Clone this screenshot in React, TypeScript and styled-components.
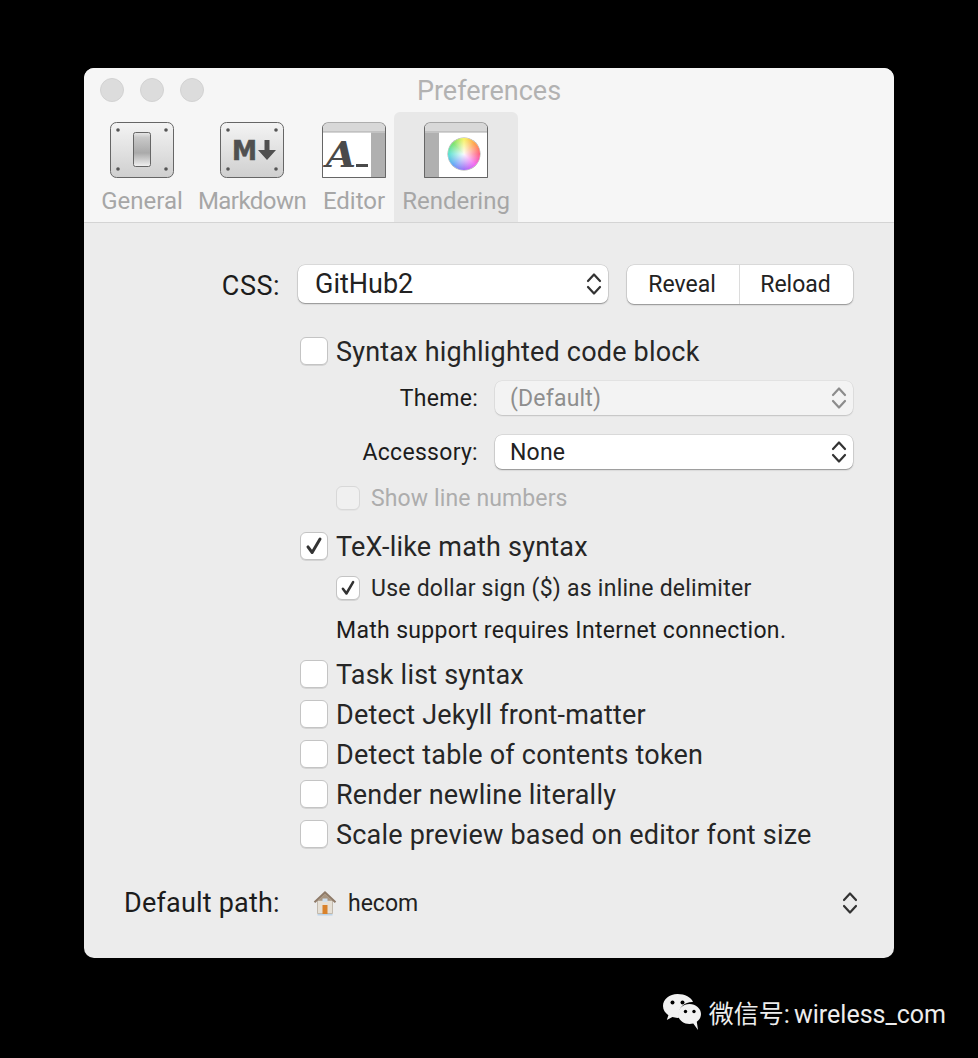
import React from 'react';
import styled, { createGlobalStyle } from 'styled-components';

const GlobalStyle = createGlobalStyle`
  html, body {
    margin: 0;
    background: #000;
  }
  body {
    font-family: Roboto, "Liberation Sans", sans-serif;
    color: #222;
  }
`;

const Page = styled.div`
  width: 978px;
  height: 1058px;
  padding: 68px 0 0 84px;
  box-sizing: border-box;
  overflow: hidden;
`;

const Window = styled.div`
  width: 810px;
  height: 890px;
  background: #ececec;
  border-radius: 10px;
  overflow: hidden;
`;

const Header = styled.div`
  height: 155px;
  box-sizing: border-box;
  background: #f6f6f6;
  border-bottom: 1px solid #d4d4d4;
`;

const TitleBar = styled.div`
  display: grid;
  grid-template-columns: 1fr auto 1fr;
  align-items: center;
  height: 44px;
  padding: 0 16px;
`;

const Lights = styled.div`
  display: flex;
  gap: 16px;
`;

const Light = styled.span`
  width: 24px;
  height: 24px;
  box-sizing: border-box;
  border-radius: 50%;
  background: #dcdcdc;
  border: 1px solid #d2d2d2;
`;

const Title = styled.div`
  font-size: 27px;
  color: #b2b2b2;
  margin-top: 1px;
`;

const Toolbar = styled.div`
  display: flex;
  padding-left: 10px;
`;

const Tab = styled.div<{ $width: number; $active?: boolean }>`
  width: ${p => p.$width}px;
  height: 110px;
  box-sizing: border-box;
  padding-top: 10px;
  display: flex;
  flex-direction: column;
  align-items: center;
  background: ${p => (p.$active ? '#e8e8e8' : 'transparent')};
  border-radius: 6px 6px 0 0;
`;

const IconBox = styled.div`
  position: relative;
  width: 64px;
  height: 56px;
`;

const ColorWheel = styled.span`
  position: absolute;
  left: 24px;
  top: 16px;
  width: 32px;
  height: 32px;
  border-radius: 50%;
  background:
    radial-gradient(circle, rgba(255, 255, 255, 0.95) 0%, rgba(255, 255, 255, 0) 72%),
    conic-gradient(#f7f25a, #ff9a3c, #ff5a7a, #f05cf0, #9a6cf5, #5aa0f5, #55e0d0, #70e060, #f7f25a);
  box-shadow: 0 0 0 0.5px rgba(0, 0, 0, 0.35);
`;

const TabLabel = styled.div<{ $tight?: boolean }>`
  margin-top: 8px;
  font-size: 24px;
  line-height: 30px;
  letter-spacing: ${p => (p.$tight ? '-0.55px' : '0')};
  color: #a6a6a6;
  white-space: nowrap;
`;

const Form = styled.div`
  padding: 42px 41px 0 0;
`;

const CssRow = styled.div`
  display: flex;
  align-items: flex-start;
  height: 39px;
`;

const RightLabel = styled.div<{ $width: number; $size: number; $spacing: number }>`
  width: ${p => p.$width}px;
  flex: none;
  text-align: right;
  font-size: ${p => p.$size}px;
  letter-spacing: ${p => p.$spacing}px;
  color: #1c1c1c;
  white-space: nowrap;
`;

const CssLabel = styled(RightLabel)`
  line-height: 43px;
`;

const Select = styled.div<{ $disabled?: boolean; $height: number }>`
  height: ${p => p.$height}px;
  box-sizing: border-box;
  display: flex;
  align-items: center;
  justify-content: space-between;
  background: ${p => (p.$disabled ? '#f3f3f3' : '#fff')};
  color: ${p => (p.$disabled ? '#8e8e8e' : '#222')};
  border-radius: 7px;
  box-shadow: 0 0 0 0.5px rgba(0, 0, 0, ${p => (p.$disabled ? 0.08 : 0.14)}),
    0 1px 1.5px rgba(0, 0, 0, ${p => (p.$disabled ? 0.14 : 0.35)});
`;

const CssSelect = styled(Select)`
  width: 310px;
  margin-left: 18px;
  padding: 0 3px 0 17px;
  font-size: 27px;
`;

const SmallSelect = styled(Select)`
  flex: 1;
  margin-left: 17px;
  padding: 0 3px 0 15px;
  font-size: 23px;
  letter-spacing: 0.2px;
`;

const ButtonGroup = styled.div`
  display: flex;
  width: 226px;
  height: 39px;
  margin-left: 19px;
  background: #fff;
  border-radius: 7px;
  box-shadow: 0 0 0 0.5px rgba(0, 0, 0, 0.14), 0 1px 1.5px rgba(0, 0, 0, 0.35);
`;

const GroupButton = styled.div<{ $divider?: boolean }>`
  flex: ${p => (p.$divider ? '0 0 113px' : 1)};
  box-sizing: border-box;
  display: flex;
  align-items: center;
  justify-content: center;
  padding-right: 2px;
  font-size: 23px;
  border-right: ${p => (p.$divider ? '1px solid #dcdcdc' : 'none')};
`;

const CheckRow = styled.div<{ $top: number }>`
  display: flex;
  align-items: center;
  height: 28px;
  margin: ${p => p.$top}px 0 0 216px;
  gap: 8px;
  font-size: 27px;
  letter-spacing: 0.2px;
  color: #262626;
  white-space: nowrap;
`;

const SubCheckRow = styled.div<{ $top: number; $disabled?: boolean }>`
  display: flex;
  align-items: center;
  height: 24px;
  margin: ${p => p.$top}px 0 0 252px;
  gap: 11px;
  font-size: 23px;
  letter-spacing: ${p => (p.$disabled ? 0.12 : 0.24)}px;
  color: ${p => (p.$disabled ? '#adadad' : '#262626')};
  white-space: nowrap;
`;

const RowText = styled.span`
  padding-top: 2px;
`;

const Box = styled.span<{ $size: number; $disabled?: boolean }>`
  flex: none;
  width: ${p => p.$size}px;
  height: ${p => p.$size}px;
  box-sizing: border-box;
  display: flex;
  align-items: center;
  justify-content: center;
  border-radius: 6px;
  background: ${p => (p.$disabled ? '#f0f0f0' : '#fff')};
  border: 1px solid ${p => (p.$disabled ? '#d8d8d8' : '#c4c4c4')};
  box-shadow: 0 1px 0.5px rgba(0, 0, 0, ${p => (p.$disabled ? 0.03 : 0.1)});
`;

const FormRow = styled.div<{ $top: number }>`
  display: flex;
  align-items: center;
  height: 34px;
  margin-top: ${p => p.$top}px;
`;

const Note = styled.div`
  height: 24px;
  line-height: 24px;
  margin: 19px 0 0 252px;
  font-size: 23px;
  letter-spacing: 0.33px;
  color: #1c1c1c;
  white-space: nowrap;
`;

const PathRow = styled.div`
  display: flex;
  align-items: center;
  height: 30px;
  margin: 40px 0 0 40px;
`;

const PathLabel = styled.div`
  width: 189px;
  flex: none;
  font-size: 27px;
  letter-spacing: 0.2px;
  color: #1c1c1c;
`;

const PathName = styled.div`
  flex: 1;
  margin-left: 11px;
  font-size: 23px;
  color: #222;
`;

const PathChevrons = styled.div`
  margin-right: -8px;
  display: flex;
`;

const Watermark = styled.div`
  display: flex;
  align-items: center;
  justify-content: flex-end;
  width: 862px;
  margin-top: 36px;
  gap: 8px;
  color: #ededed;
  font-size: 25px;
  word-spacing: -2px;
  font-family: Roboto, "Noto Sans CJK SC", sans-serif;
  white-space: nowrap;
`;

const Chevrons = ({ color = '#333' }: { color?: string }) => (
  <svg width="22" height="28" viewBox="0 0 22 28" fill="none" stroke={color} strokeWidth="2.2" strokeLinecap="round" strokeLinejoin="round">
    <path d="M5 11 11 4.500 17 11" />
    <path d="M5 17 11 23.500 17 17" />
  </svg>
);

const Check = ({ size }: { size: number }) => (
  <svg width={size} height={size} viewBox="0 0 28 28" fill="none" stroke="#333" strokeWidth="3.200" strokeLinecap="round" strokeLinejoin="round">
    <path d="M7.500 15 12 21 20.500 6.500" />
  </svg>
);

const Screws = () => (
  <g fill="#555">
    <circle cx="8" cy="8" r="1.800" />
    <circle cx="56" cy="8" r="1.800" />
    <circle cx="8" cy="47" r="1.800" />
    <circle cx="56" cy="47" r="1.800" />
  </g>
);

const GeneralIcon = () => (
  <svg width="64" height="56" viewBox="0 0 64 56">
    <defs>
      <linearGradient id="plate" x1="0" y1="0" x2="0" y2="1">
        <stop offset="0" stopColor="#f4f4f4" />
        <stop offset="1" stopColor="#cfcfcf" />
      </linearGradient>
      <linearGradient id="lever" x1="0" y1="0" x2="0" y2="1">
        <stop offset="0" stopColor="#e8e8e8" />
        <stop offset="0.15" stopColor="#c8c8c8" />
        <stop offset="0.6" stopColor="#aaa" />
        <stop offset="1" stopColor="#f2f2f2" />
      </linearGradient>
    </defs>
    <rect x="0.500" y="0.500" width="63" height="55" rx="6" fill="url(#plate)" stroke="#666" />
    <Screws />
    <rect x="23.500" y="10.500" width="17" height="34" rx="2" fill="url(#lever)" stroke="#666" />
  </svg>
);

const MarkdownIcon = () => (
  <svg width="64" height="56" viewBox="0 0 64 56">
    <rect x="0.500" y="0.500" width="63" height="55" rx="6" fill="url(#plate)" stroke="#666" />
    <Screws />
    <text x="12" y="38" fontFamily="'DejaVu Sans'" fontWeight="700" fontSize="27" textLength="25" lengthAdjust="spacingAndGlyphs" fill="#505050" stroke="#505050" strokeWidth="0.6">M</text>
    <path d="M44.500 18h5v10h6.500L47 38l-9-10h6.500z" fill="#505050" />
  </svg>
);

const windowFrame = (
  <>
    <path d="M0.500 55.500V6a5 5 0 0 1 5-5h53a5 5 0 0 1 5 5v49.500z" fill="#fff" stroke="#666" />
    <path d="M1 10V6a5 5 0 0 1 5-5h52a5 5 0 0 1 5 5v4z" fill="#d8d8d8" />
    <path d="M1 10h62" stroke="#aaa" />
  </>
);

const EditorIcon = () => (
  <svg width="64" height="56" viewBox="0 0 64 56">
    {windowFrame}
    <rect x="49" y="10.500" width="14" height="44.500" fill="#b0b0b0" />
    <text x="4" y="45" fontFamily="'DejaVu Serif'" fontStyle="italic" fontWeight="700" fontSize="35" textLength="30" lengthAdjust="spacingAndGlyphs" fill="#4a4a4a">A</text>
    <rect x="34" y="42" width="12" height="3" fill="#4a4a4a" />
    <path d="M0.500 55.500h63" stroke="#666" />
  </svg>
);

const RenderingIcon = () => (
  <IconBox>
    <svg width="64" height="56" viewBox="0 0 64 56">
      {windowFrame}
      <rect x="1" y="10.500" width="14" height="44.500" fill="#b0b0b0" />
      <path d="M0.500 55.500h63" stroke="#666" />
    </svg>
    <ColorWheel />
  </IconBox>
);

const HomeIcon = () => (
  <svg width="24" height="26" viewBox="0 0 24 26">
    <path d="M4.500 10.500h15v13h-15z" fill="#e6e0d6" stroke="#b9ae9f" strokeWidth="0.800" />
    <path d="M4.500 24h15v1.500h-15z" fill="#bcd3e8" />
    <path d="M12 1 .8 11.500l1.400 1.400L12 4l9.800 8.900 1.400-1.400z" fill="#8e7a68" />
    <path d="M12 3.500 5 10.500h14z" fill="#a8947f" />
    <rect x="9.500" y="15" width="5" height="9" fill="#d9822b" />
    <rect x="9.500" y="8.500" width="5" height="3.500" fill="#cfe0ef" />
  </svg>
);

const WeChatIcon = () => (
  <svg width="38" height="36" viewBox="0 0 38 36">
    <path d="M14.500 0C6.500 0 0 5.400 0 12c0 3.800 2.100 7 5.400 9.200L3.800 26l5.600-2.900c1.600.5 3.300.8 5.100.8.700 0 1.300 0 2-.1-.5-1.300-.7-2.600-.7-4 0-6.500 6-11.800 13.400-11.800h.8C28.300 3.400 22 0 14.500 0z" fill="#f2f2f2" />
    <circle cx="9.500" cy="8.500" r="2" fill="#000" />
    <circle cx="19.500" cy="8.500" r="2" fill="#000" />
    <path d="M38 20c0-5.500-5.200-10-11.500-10S15 14.500 15 20s5.200 10 11.500 10c1.300 0 2.600-.2 3.800-.5L35 36l-1.200-8.300c2.600-1.800 4.200-4.600 4.200-7.700z" fill="#f2f2f2" />
    <circle cx="22.500" cy="17.500" r="1.700" fill="#000" />
    <circle cx="31" cy="17.500" r="1.700" fill="#000" />
  </svg>
);

const tabs = [
  { label: 'General', width: 96, icon: <GeneralIcon /> },
  { label: 'Markdown', width: 124, icon: <MarkdownIcon />, tight: true },
  { label: 'Editor', width: 80, icon: <EditorIcon /> },
  { label: 'Rendering', width: 124, icon: <RenderingIcon />, active: true },
];

const plainOptions = [
  { label: 'Task list syntax', top: 17 },
  { label: 'Detect Jekyll front-matter', top: 12 },
  { label: 'Detect table of contents token', top: 12 },
  { label: 'Render newline literally', top: 12 },
  { label: 'Scale preview based on editor font size', top: 12 },
];

const App: React.FC = () => (
  <Page>
    <GlobalStyle />
    <Window>
      <Header>
        <TitleBar>
          <Lights>
            <Light />
            <Light />
            <Light />
          </Lights>
          <Title>Preferences</Title>
        </TitleBar>
        <Toolbar>
          {tabs.map(tab => (
            <Tab key={tab.label} $width={tab.width} $active={tab.active}>
              {tab.icon}
              <TabLabel $tight={tab.tight}>{tab.label}</TabLabel>
            </Tab>
          ))}
        </Toolbar>
      </Header>
      <Form>
        <CssRow>
          <CssLabel $width={196} $size={27} $spacing={0.5}>CSS:</CssLabel>
          <CssSelect $height={38}>
            GitHub2
            <Chevrons />
          </CssSelect>
          <ButtonGroup>
            <GroupButton $divider>Reveal</GroupButton>
            <GroupButton>Reload</GroupButton>
          </ButtonGroup>
        </CssRow>

        <CheckRow $top={33}>
          <Box $size={28} />
          <RowText>Syntax highlighted code block</RowText>
        </CheckRow>
        <FormRow $top={16}>
          <RightLabel $width={394} $size={23} $spacing={0.3}>Theme:</RightLabel>
          <SmallSelect $height={34} $disabled>
            (Default)
            <Chevrons color="#8c8c8c" />
          </SmallSelect>
        </FormRow>
        <FormRow $top={20}>
          <RightLabel $width={394} $size={23} $spacing={0.3}>Accessory:</RightLabel>
          <SmallSelect $height={34}>
            None
            <Chevrons />
          </SmallSelect>
        </FormRow>
        <SubCheckRow $top={17} $disabled>
          <Box $size={24} $disabled />
          Show line numbers
        </SubCheckRow>

        <CheckRow $top={22}>
          <Box $size={28}><Check size={28} /></Box>
          <RowText>TeX-like math syntax</RowText>
        </CheckRow>
        <SubCheckRow $top={16}>
          <Box $size={24}><Check size={24} /></Box>
          Use dollar sign ($) as inline delimiter
        </SubCheckRow>
        <Note>Math support requires Internet connection.</Note>

        {plainOptions.map(option => (
          <CheckRow key={option.label} $top={option.top}>
            <Box $size={28} />
            <RowText>{option.label}</RowText>
          </CheckRow>
        ))}

        <PathRow>
          <PathLabel>Default path:</PathLabel>
          <HomeIcon />
          <PathName>hecom</PathName>
          <PathChevrons>
            <Chevrons />
          </PathChevrons>
        </PathRow>
      </Form>
    </Window>
    <Watermark>
      <WeChatIcon />
      微信号: wireless_com
    </Watermark>
  </Page>
);

export default App;
